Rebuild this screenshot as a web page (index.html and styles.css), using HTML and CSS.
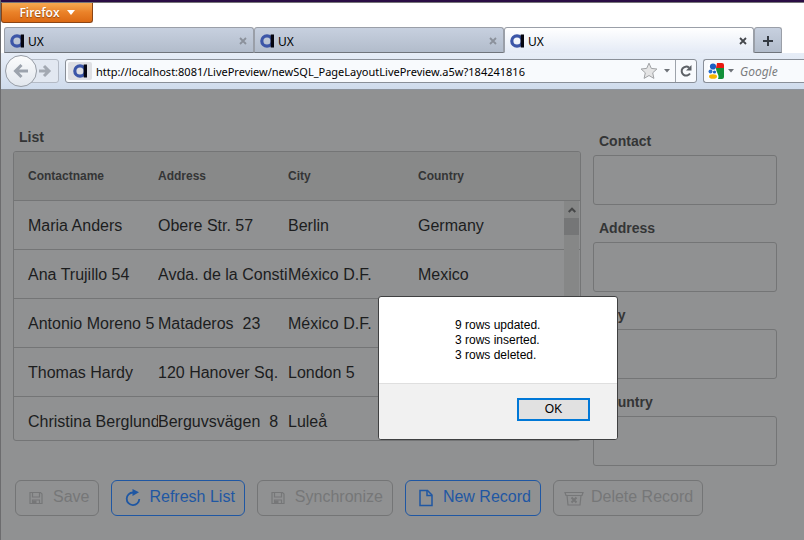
FILE: index.html
```html
<!DOCTYPE html>
<html lang="en">
<head>
<meta charset="utf-8">
<title>UX</title>
<link rel="stylesheet" href="styles.css">
</head>
<body>
<svg class="defs" aria-hidden="true">
  <symbol id="logo" viewBox="0 0 14 14">
    <circle cx="7" cy="7" r="5.2" fill="none" stroke="#3c56a8" stroke-width="3.200"/>
    <rect x="10.700" y="0.500" width="3.300" height="13" fill="#050510"/>
  </symbol>
  <symbol id="close" viewBox="0 0 8 8">
    <path d="M1 1l6 6M7 1l-6 6" fill="none" stroke="currentColor" stroke-width="1.8"/>
  </symbol>
  <symbol id="disk" viewBox="0 0 20 20">
    <path d="M4 5.500h10.500l1.500 1.500v9.500h-12z" fill="none" stroke="currentColor" stroke-width="1.200"/>
    <path d="M6.500 5.500v4.500h7v-4.500M6.500 16.500v-3.500h7v3.500" fill="none" stroke="currentColor" stroke-width="1.200"/>
    <rect x="7" y="13.500" width="3.500" height="3" fill="currentColor"/>
  </symbol>
</svg>
<div class="browser">
  <header class="chrome">
    <div class="titlebar">
      <button class="app-menu" type="button">Firefox
        <svg width="8" height="5" viewBox="0 0 8 5"><path d="M0 0h8l-4 5z" fill="#fff"/></svg>
      </button>
    </div>
    <div class="tabs">
      <div class="tab"><svg class="logo"><use href="#logo"/></svg><span class="tab-title">UX</span><button class="tab-close" type="button" aria-label="Close tab"><svg><use href="#close"/></svg></button></div>
      <div class="tab"><svg class="logo"><use href="#logo"/></svg><span class="tab-title">UX</span><button class="tab-close" type="button" aria-label="Close tab"><svg><use href="#close"/></svg></button></div>
      <div class="tab active"><svg class="logo"><use href="#logo"/></svg><span class="tab-title">UX</span><button class="tab-close" type="button" aria-label="Close tab"><svg><use href="#close"/></svg></button></div>
      <button class="tab-new" type="button" aria-label="New tab"><svg width="12" height="12" viewBox="0 0 12 12"><path d="M6 1v10M1 6h10" stroke="#343a42" stroke-width="2"/></svg></button>
    </div>
    <div class="navbar">
      <div class="history">
        <button class="back" type="button" aria-label="Back"><svg width="16" height="16" viewBox="0 0 16 16"><path d="M15 8H3M8.500 2L2.500 8l6 6" fill="none" stroke="#9ca3ad" stroke-width="3"/></svg></button>
        <button class="forward" type="button" aria-label="Forward"><svg width="14" height="14" viewBox="0 0 14 14"><path d="M1 7h10M6 2l5 5-5 5" fill="none" stroke="#a3a9b2" stroke-width="3"/></svg></button>
      </div>
      <div class="address">
        <span class="identity"><svg class="logo"><use href="#logo"/></svg></span>
        <input class="url" type="text" aria-label="Address" value="http://localhost:8081/LivePreview/newSQL_PageLayoutLivePreview.a5w?184241816">
        <button class="bar-button star" type="button" aria-label="Bookmark"><svg width="18" height="18" viewBox="0 0 18 18"><path d="M9 1.200l2.300 5.200 5.600.6-4.200 3.800 1.200 5.600L9 13.500l-4.900 2.900 1.200-5.600L1.100 7l5.600-.6z" fill="#e4e4e5" stroke="#a0a2a5"/></svg></button>
        <button class="bar-button drop" type="button" aria-label="History"><svg width="6" height="4" viewBox="0 0 6 4"><path d="M0 0h6L3 3.500z" fill="#6e7278"/></svg></button>
        <button class="bar-button reload" type="button" aria-label="Reload"><svg width="14" height="14" viewBox="0 0 14 14"><path d="M10 3.600A4.500 4.500 0 1 0 11 9.500" fill="none" stroke="#5c6066" stroke-width="2"/><path d="M12.500 1v5.500H7z" fill="#5c6066"/></svg></button>
      </div>
      <div class="search">
        <svg width="16" height="16" viewBox="0 0 16 16"><rect width="16" height="16" rx="2" fill="#fff"/><path d="M9 0h5a2 2 0 0 1 2 2v3H8z" fill="#ea1a10"/><path d="M8 5h8v9a2 2 0 0 1-2 2h-4c2-4-2-6-2-11z" fill="#13913a"/><circle cx="5" cy="3.500" r="3.100" fill="#1c5fc4"/><circle cx="2.500" cy="8.500" r="2" fill="#2d70cc"/><circle cx="6.500" cy="9" r="1.600" fill="#1c5fc4"/><ellipse cx="5" cy="13.500" rx="4" ry="2.300" fill="#f5b400"/></svg>
        <svg width="6" height="4" viewBox="0 0 6 4"><path d="M0 0h6L3 3.500z" fill="#6e7278"/></svg>
        <input type="text" aria-label="Search" placeholder="Google">
      </div>
    </div>
  </header>

  <main class="page">
    <div class="columns">
      <section class="list">
        <h2>List</h2>
        <div class="list-box">
          <table>
            <thead><tr><th>Contactname</th><th>Address</th><th>City</th><th>Country</th></tr></thead>
            <tbody>
              <tr><td>Maria Anders</td><td>Obere Str. 57</td><td>Berlin</td><td>Germany</td></tr>
              <tr><td>Ana Trujillo 54</td><td>Avda. de la Consti</td><td>México D.F.</td><td>Mexico</td></tr>
              <tr><td>Antonio Moreno 5</td><td>Mataderos&nbsp; 23</td><td>México D.F.</td><td></td></tr>
              <tr><td>Thomas Hardy</td><td>120 Hanover Sq.</td><td>London 5</td><td></td></tr>
              <tr><td>Christina Berglund</td><td>Berguvsvägen&nbsp; 8</td><td>Luleå</td><td></td></tr>
            </tbody>
          </table>
          <div class="scrollbar">
            <svg width="8" height="6" viewBox="0 0 8 6"><path d="M.7 5L4 1.700 7.300 5" fill="none" stroke="#474849" stroke-width="2"/></svg>
            <div class="thumb"></div>
          </div>
        </div>
      </section>
      <form class="fields">
        <label for="contact">Contact</label><input id="contact" type="text">
        <label for="address">Address</label><input id="address" type="text">
        <label for="city">City</label><input id="city" type="text">
        <label for="country">Country</label><input id="country" type="text">
      </form>
    </div>
    <div class="actions">
      <button type="button" disabled><svg><use href="#disk"/></svg>Save</button>
      <button type="button"><svg viewBox="0 0 20 20"><path d="M11 5.500A6.300 6.300 0 1 0 17.300 12" fill="none" stroke="currentColor" stroke-width="1.800"/><path d="M10.500 2l6.500 3.300-6.500 3.700z" fill="currentColor"/></svg>Refresh List</button>
      <button type="button" disabled><svg><use href="#disk"/></svg>Synchronize</button>
      <button type="button"><svg viewBox="0 0 20 20"><path d="M4 3.500h7.500l4.500 4.500v10.500h-12z" fill="none" stroke="currentColor" stroke-width="1.500"/><path d="M11 3.500v5h5" fill="none" stroke="currentColor" stroke-width="1.500"/></svg>New Record</button>
      <button type="button" disabled><svg viewBox="0 0 20 20"><path d="M1 5.500h18l-1 3h-16zM3 8.500l1 9.500h12l1-9.500" fill="none" stroke="currentColor" stroke-width="1.200"/><path d="M7.500 10.500l5 5M12.500 10.500l-5 5" stroke="currentColor" stroke-width="2"/></svg>Delete Record</button>
    </div>
  </main>
</div>

<div class="alert" role="alertdialog" aria-labelledby="alert-text">
  <div class="alert-body"><p id="alert-text">9 rows updated.<br>3 rows inserted.<br>3 rows deleted.</p></div>
  <div class="alert-footer"><button type="button">OK</button></div>
</div>
</body>
</html>
```

FILE: styles.css
```css
* { box-sizing: border-box; }
body { margin: 0; font-family: "Liberation Sans", Arial, sans-serif; }
button, input { font: inherit; color: inherit; margin: 0; padding: 0; }
svg { display: block; flex: none; }
.defs { position: absolute; width: 0; height: 0; }
.browser {
  min-height: 100vh;
  display: flex;
  flex-direction: column;
  border-left: 1px solid #6c6c6e;
}

/* Browser chrome */
.chrome {
  font-family: "Noto Sans", "Open Sans", sans-serif;
  font-size: 12px;
  color: #000;
  background: #fff;
  border-top: 2px solid #2a0d45;
}
.titlebar { height: 25px; border-top: 1px solid #77757a; }
.app-menu {
  display: flex;
  align-items: center;
  justify-content: center;
  gap: 7px;
  width: 92px;
  height: 20px;
  border: 1px solid #8a4515;
  border-top: 0;
  border-radius: 0 0 3px 3px;
  background: linear-gradient(#f6a850, #ea8128 50%, #dc6a14);
  color: #fff;
  font-family: "Open Sans", sans-serif;
  font-weight: 600;
  text-shadow: 0 1px 1px #8a4515;
}
.tabs { display: flex; height: 26px; padding-left: 3px; }
.tab {
  display: flex;
  align-items: center;
  flex: 0 1 250px;
  gap: 4px;
  padding: 2px 6px 0 5px;
  border: 1px solid #9a9fa8;
  border-bottom-color: #70757c;
  border-radius: 3px 3px 0 0;
  background: linear-gradient(#c7d0df, #b2bccb);
}
.tab.active { background: linear-gradient(#fff, #e5ebf6); border-bottom-color: #e5ebf6; }
.logo { width: 14px; height: 14px; }
.tab-title { flex: 1; }
.tab-close { border: 0; background: none; color: #8b919b; }
.active .tab-close { color: #44474c; }
.tab-close svg { width: 8px; height: 8px; }
.tab-new {
  display: grid;
  place-items: center;
  width: 28px;
  padding-top: 2px;
  border: 1px solid #9a9fa8;
  border-bottom-color: #70757c;
  border-radius: 3px 3px 0 0;
  background: linear-gradient(#c7d0df, #b2bccb);
}
.navbar {
  display: flex;
  align-items: center;
  gap: 6px;
  height: 37px;
  padding-left: 4px;
  background: linear-gradient(#e7edf7, #cfdbec);
  border-bottom: 1px solid #8d939b;
}
.history { display: flex; align-items: center; }
.back, .forward { display: grid; place-items: center; border: 1px solid #979da6; }
.back {
  z-index: 1;
  width: 32px;
  height: 32px;
  border-radius: 50%;
  background: linear-gradient(#fbfcfd, #e2e7ee);
}
.forward {
  width: 28px;
  height: 24px;
  margin-left: -6px;
  border-color: #b3bac5;
  border-radius: 0 3px 3px 0;
  background: #e2e8f1;
}
.address, .search {
  display: flex;
  align-items: center;
  height: 24px;
  border: 1px solid #898f98;
  border-radius: 3px;
  background: #f8fafd;
}
.address { flex: 1; padding-left: 2px; }
.identity {
  display: grid;
  place-items: center;
  width: 24px;
  height: 18px;
  border-radius: 2px;
  background: #dedfe3;
}
.url { flex: 1; min-width: 0; padding-left: 4px; border: 0; background: none; font-size: 11px; }
.bar-button { display: grid; place-items: center; height: 22px; border: 0; background: none; }
.star { width: 18px; }
.drop { width: 17px; }
.reload { width: 21px; border-left: 1px solid #9da3ab; }
.search { width: 101px; padding-left: 4px; gap: 4px; border-right: 0; border-radius: 3px 0 0 3px; }
.search input { flex: 1; min-width: 0; padding-left: 2px; border: 0; background: none; font-style: italic; }
.search input::placeholder { color: #7b7d80; opacity: 1; }

/* Page behind the dialog */
.page { flex: 1; padding: 37px 27px 24px 12px; background: #909192; color: #343536; }
.columns { display: flex; gap: 12px; }
.list { flex: 1; min-width: 0; }
h2, .fields label { margin: 0; padding-left: 6px; font-size: 14px; font-weight: 700; line-height: 20px; }
.list-box {
  position: relative;
  height: 290px;
  margin-top: 4px;
  overflow: hidden;
  border: 1px solid #747576;
  border-radius: 3px;
}
table { width: 100%; table-layout: fixed; border-collapse: separate; border-spacing: 0; }
th, td {
  width: 130px;
  height: 49px;
  padding: 0;
  overflow: hidden;
  border-bottom: 1px solid #747576;
  text-align: left;
  white-space: nowrap;
}
th { background: #888989; font-size: 12px; }
td { padding-top: 2px; color: #1c1d1e; font-size: 16px; }
th:first-child, td:first-child { width: 144px; padding-left: 14px; }
th:last-child, td:last-child { width: auto; }
.scrollbar {
  position: absolute;
  top: 49px;
  right: 1px;
  bottom: 0;
  width: 15px;
  background: #868787;
}
.scrollbar svg { margin: 6px auto 5px; }
.thumb { height: 17px; background: #757677; }
.fields { display: flex; flex-direction: column; width: 184px; padding-top: 4px; }
.fields input {
  height: 50px;
  margin: 4px 0 13px;
  padding: 0 10px;
  border: 1px solid #747576;
  border-radius: 3px;
  background: none;
}
.actions { display: flex; gap: 12px; padding: 1px 0 0 2px; }
.actions button {
  display: flex;
  align-items: center;
  gap: 7px;
  height: 36px;
  padding: 0 9px 2px 10px;
  border: 1px solid #1f57a3;
  border-radius: 6px;
  background: none;
  color: #1f57a3;
  font-size: 16px;
  white-space: nowrap;
}
.actions button:disabled { border-color: #747576; color: #767778; }
.actions svg { width: 20px; height: 20px; }

/* Alert dialog */
.alert {
  position: absolute;
  top: 296px;
  left: 378px;
  width: 240px;
  overflow: hidden;
  border: 1px solid #3f4041;
  border-radius: 3px;
  background: #fff;
  color: #000;
  font-size: 12px;
  line-height: 15px;
}
.alert-body { padding: 21px 0 20px 76px; }
.alert-body p { margin: 0; }
.alert-footer {
  display: flex;
  justify-content: flex-end;
  padding: 14px 27px 18px;
  border-top: 1px solid #dfdfdf;
  background: #f1f1f1;
}
.alert-footer button { width: 73px; height: 23px; border: 2px solid #0078d7; background: #e1e1e1; }
```
